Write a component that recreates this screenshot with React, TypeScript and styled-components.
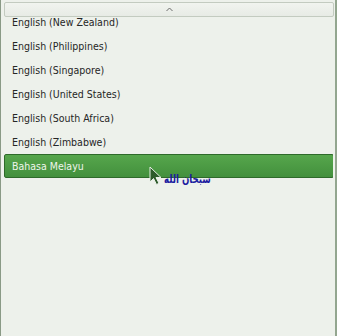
import React from "react";
import styled, { createGlobalStyle } from "styled-components";

const Global = createGlobalStyle`
  html, body { margin: 0; padding: 0; background: #edf1eb; }
  body { width: 337px; height: 336px; overflow: hidden; }
`;

const Menu = styled.div`
  position: relative;
  box-sizing: border-box;
  width: 337px;
  height: 336px;
  background: #edf1eb;
  border-left: 1px solid #8a9a86;
  border-right: 2px solid #93a68f;
  padding: 2px 2px 0 3px;
  display: flex;
  flex-direction: column;
  font-family: "DejaVu Sans Condensed", "DejaVu Sans", sans-serif;
  overflow: hidden;
`;

const ScrollButton = styled.div`
  box-sizing: border-box;
  height: 15px;
  width: 330px;
  border: 1px solid #c3cbc0;
  border-radius: 2px;
  background: linear-gradient(#f1f4ef, #e7ebe5);
  display: flex;
  align-items: center;
  justify-content: center;
  flex-shrink: 0;
`;

const Viewport = styled.div`
  flex: 1;
  overflow: hidden;
  margin-top: 1px;
`;

const List = styled.div`
  display: flex;
  flex-direction: column;
  margin-top: -8px;
`;

const Item = styled.div<{ $selected?: boolean }>`
  box-sizing: border-box;
  height: 24px;
  width: 330px;
  display: flex;
  align-items: center;
  padding-left: 7px;
  font-size: 10.5px;
  color: ${(p) => (p.$selected ? "#eef5ec" : "#262626")};
  border-radius: 2px;
  border: 1px solid ${(p) => (p.$selected ? "#2e6a2a" : "transparent")};
  background: ${(p) =>
    p.$selected ? "linear-gradient(#56a64c, #43903d)" : "transparent"};
`;

const DragOverlay = styled.div`
  position: absolute;
  z-index: 2;
  left: 148px;
  top: 166px;
  display: flex;
  align-items: flex-start;
  pointer-events: none;
`;

const DragLabel = styled.span`
  display: inline-block;
  margin-left: 1px;
  margin-top: 5px;
  font-family: "DejaVu Sans", sans-serif;
  font-weight: 600;
  font-size: 12px;
  line-height: 16px;
  color: #1c1ca0;
  direction: rtl;
  transform: scaleX(0.72);
  transform-origin: left center;
`;

const items = [
  "English (New Zealand)",
  "English (Philippines)",
  "English (Singapore)",
  "English (United States)",
  "English (South Africa)",
  "English (Zimbabwe)",
];

export default function App() {
  return (
    <>
      <Global />
      <Menu>
        <ScrollButton>
          <svg width="7" height="5" viewBox="0 0 7 5">
            <path d="M0.5 4 L3.5 1 L6.5 4" fill="none" stroke="#6b6b6b" strokeWidth="1" />
          </svg>
        </ScrollButton>
        <Viewport>
          <List>
            {items.map((t) => (
              <Item key={t}>{t}</Item>
            ))}
            <Item $selected>Bahasa Melayu</Item>
          </List>
        </Viewport>
        <DragOverlay>
          <svg width="14" height="20" viewBox="0 0 14 20">
            <path
              d="M1 1 L1 16 L4.5 12.5 L7.5 18.5 L10 17.3 L7 11.5 L12 11.5 Z"
              fill="#2d5a2a"
              stroke="#e8efe6"
              strokeWidth="1"
              strokeLinejoin="round"
            />
          </svg>
          <DragLabel>سبحان الله</DragLabel>
        </DragOverlay>
      </Menu>
    </>
  );
}
